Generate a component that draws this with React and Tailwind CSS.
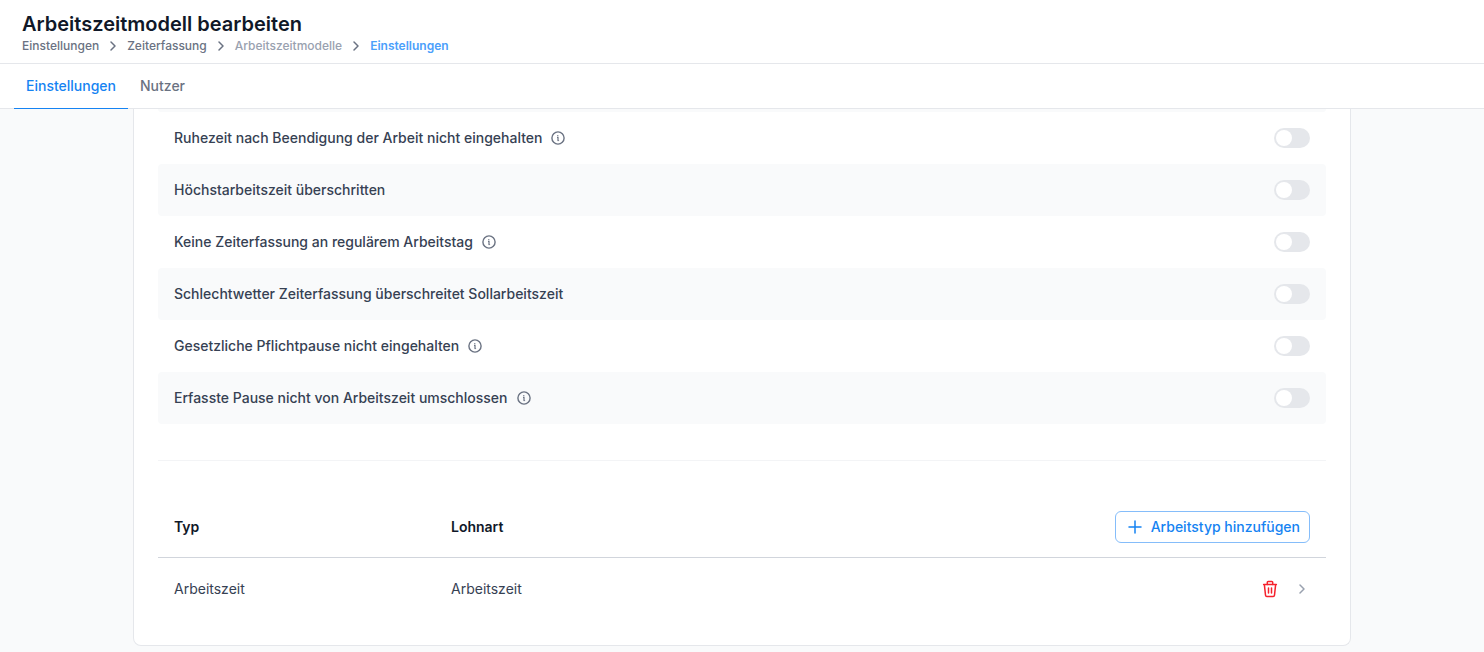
import React, { useState } from "react";

const breadcrumbs = [
  { label: "Einstellungen", style: "font-medium text-gray-500" },
  { label: "Zeiterfassung", style: "font-medium text-gray-500" },
  { label: "Arbeitszeitmodelle", style: "font-medium text-gray-400" },
  { label: "Einstellungen", style: "font-semibold text-[#4ba0fb]" },
];

const warnings = [
  {
    id: "rest-period",
    label: "Ruhezeit nach Beendigung der Arbeit nicht eingehalten",
    info: true,
  },
  { id: "max-hours", label: "Höchstarbeitszeit überschritten" },
  {
    id: "missing-tracking",
    label: "Keine Zeiterfassung an regulärem Arbeitstag",
    info: true,
  },
  {
    id: "bad-weather",
    label: "Schlechtwetter Zeiterfassung überschreitet Sollarbeitszeit",
  },
  {
    id: "mandatory-break",
    label: "Gesetzliche Pflichtpause nicht eingehalten",
    info: true,
  },
  {
    id: "break-outside",
    label: "Erfasste Pause nicht von Arbeitszeit umschlossen",
    info: true,
  },
];

const workTypes = [{ type: "Arbeitszeit", wage: "Arbeitszeit" }];

const ChevronIcon = ({ className }) => (
  <svg
    className={className}
    viewBox="0 0 12 12"
    fill="none"
    stroke="currentColor"
    strokeWidth="1.5"
    strokeLinecap="round"
    strokeLinejoin="round"
    aria-hidden="true"
  >
    <path d="M4 2l4 4-4 4" />
  </svg>
);

const InfoIcon = () => (
  <svg
    className="size-4 text-gray-500"
    viewBox="0 0 16 16"
    fill="none"
    stroke="currentColor"
    aria-hidden="true"
  >
    <circle cx="8" cy="8" r="6.1" strokeWidth="1.4" />
    <path d="M7 7.3h1v3.2" strokeWidth="1.2" />
    <path d="M7.5 10.6h1.6" strokeWidth="0.9" />
    <circle cx="7.8" cy="5.6" r="0.7" fill="currentColor" stroke="none" />
  </svg>
);

const PlusIcon = () => (
  <svg
    className="size-4"
    viewBox="0 0 16 16"
    fill="none"
    stroke="currentColor"
    strokeWidth="1.5"
    strokeLinecap="round"
    aria-hidden="true"
  >
    <path d="M8 2v12M2 8h12" />
  </svg>
);

const TrashIcon = () => (
  <svg
    className="size-5"
    viewBox="0 0 20 20"
    fill="none"
    stroke="currentColor"
    strokeWidth="1.5"
    strokeLinecap="round"
    strokeLinejoin="round"
    aria-hidden="true"
  >
    <path d="M3.6 5.6h12.8" />
    <path d="M7.3 5.4V3.3c0-.6.3-.9.9-.9h3.6c.6 0 .9.3.9.9v2.1" />
    <path d="M4.4 5.8l1.1 10.4c.1.8.5 1.2 1.3 1.2h6.4c.8 0 1.2-.4 1.3-1.2l1.1-10.4" />
    <path d="M8.5 9v5M11.5 9v5" />
  </svg>
);

const WarningRow = ({ id, label, info }) => {
  const [enabled, setEnabled] = useState(false);

  return (
    <li className="flex h-13 items-center justify-between rounded px-4 even:bg-gray-50">
      <div className="flex items-center gap-2">
        <label htmlFor={id} className="text-sm font-medium text-gray-700">
          {label}
        </label>
        {info && <InfoIcon />}
      </div>
      <input
        id={id}
        type="checkbox"
        role="switch"
        checked={enabled}
        onChange={(e) => setEnabled(e.target.checked)}
        className="flex h-5 w-9 cursor-pointer appearance-none items-center rounded-full bg-gray-200 px-0.5 before:size-4 before:rounded-full before:bg-white checked:justify-end checked:bg-[#1583f2]"
      />
    </li>
  );
};

const App = () => {
  return (
    <div className="flex min-h-screen flex-col bg-gray-50 font-['Inter',sans-serif] text-sm">
      <header className="h-16 border-b border-gray-200 bg-white px-[22px] pt-2.5">
        <h1 className="text-xl leading-7 font-semibold text-gray-900">
          Arbeitszeitmodell bearbeiten
        </h1>
        <nav aria-label="Breadcrumb">
          <ol className="flex items-center gap-2">
            {breadcrumbs.map((item, i) => (
              <li key={i} className="flex items-center gap-2">
                {i > 0 && <ChevronIcon className="size-3 text-gray-500" />}
                <a href="#" className={`text-xs leading-4 ${item.style}`}>
                  {item.label}
                </a>
              </li>
            ))}
          </ol>
        </nav>
      </header>

      <nav className="flex h-[45px] border-b border-gray-200 bg-white px-3.5 font-medium">
        <a
          href="#"
          className="-mb-px flex items-center border-b border-[#1583f2] px-3 text-[#1583f2]"
        >
          Einstellungen
        </a>
        <a href="#" className="flex items-center px-3 text-gray-500">
          Nutzer
        </a>
      </nav>

      <main className="px-4 pb-1.5">
        <section className="mx-auto max-w-[1218px] rounded-b-lg border border-t-0 border-gray-200 bg-white px-6 pb-[25px]">
          {/* end of the row that is scrolled under the tabs */}
          <div className="h-[3px] rounded-b bg-gray-50" />
          <ul>
            {warnings.map((warning) => (
              <WarningRow key={warning.id} {...warning} />
            ))}
          </ul>

          <hr className="my-9 border-gray-100" />

          <table className="w-full table-fixed text-left">
            <thead>
              <tr className="h-15 border-b border-gray-300 text-gray-900">
                <th className="w-[277px] px-4 font-semibold">Typ</th>
                <th className="px-4 font-semibold">Lohnart</th>
                <th className="px-4">
                  <button
                    type="button"
                    className="ml-auto flex h-8 items-center gap-2 rounded-md border border-[#85bdfa] pr-[9px] pl-[11px] font-medium whitespace-nowrap text-[#1583f2]"
                  >
                    <PlusIcon />
                    Arbeitstyp hinzufügen
                  </button>
                </th>
              </tr>
            </thead>
            <tbody>
              {workTypes.map((item) => (
                <tr key={item.type} className="h-[63px] text-gray-700">
                  <td className="px-4">{item.type}</td>
                  <td className="px-4">{item.wage}</td>
                  <td className="px-4">
                    <div className="flex items-center justify-end gap-3.5">
                      <button
                        type="button"
                        aria-label="Löschen"
                        className="text-[#f5222d]"
                      >
                        <TrashIcon />
                      </button>
                      <button
                        type="button"
                        aria-label="Öffnen"
                        className="flex size-4 items-center justify-center text-gray-400"
                      >
                        <ChevronIcon className="size-3" />
                      </button>
                    </div>
                  </td>
                </tr>
              ))}
            </tbody>
          </table>
        </section>
      </main>
    </div>
  );
};

export default App;
